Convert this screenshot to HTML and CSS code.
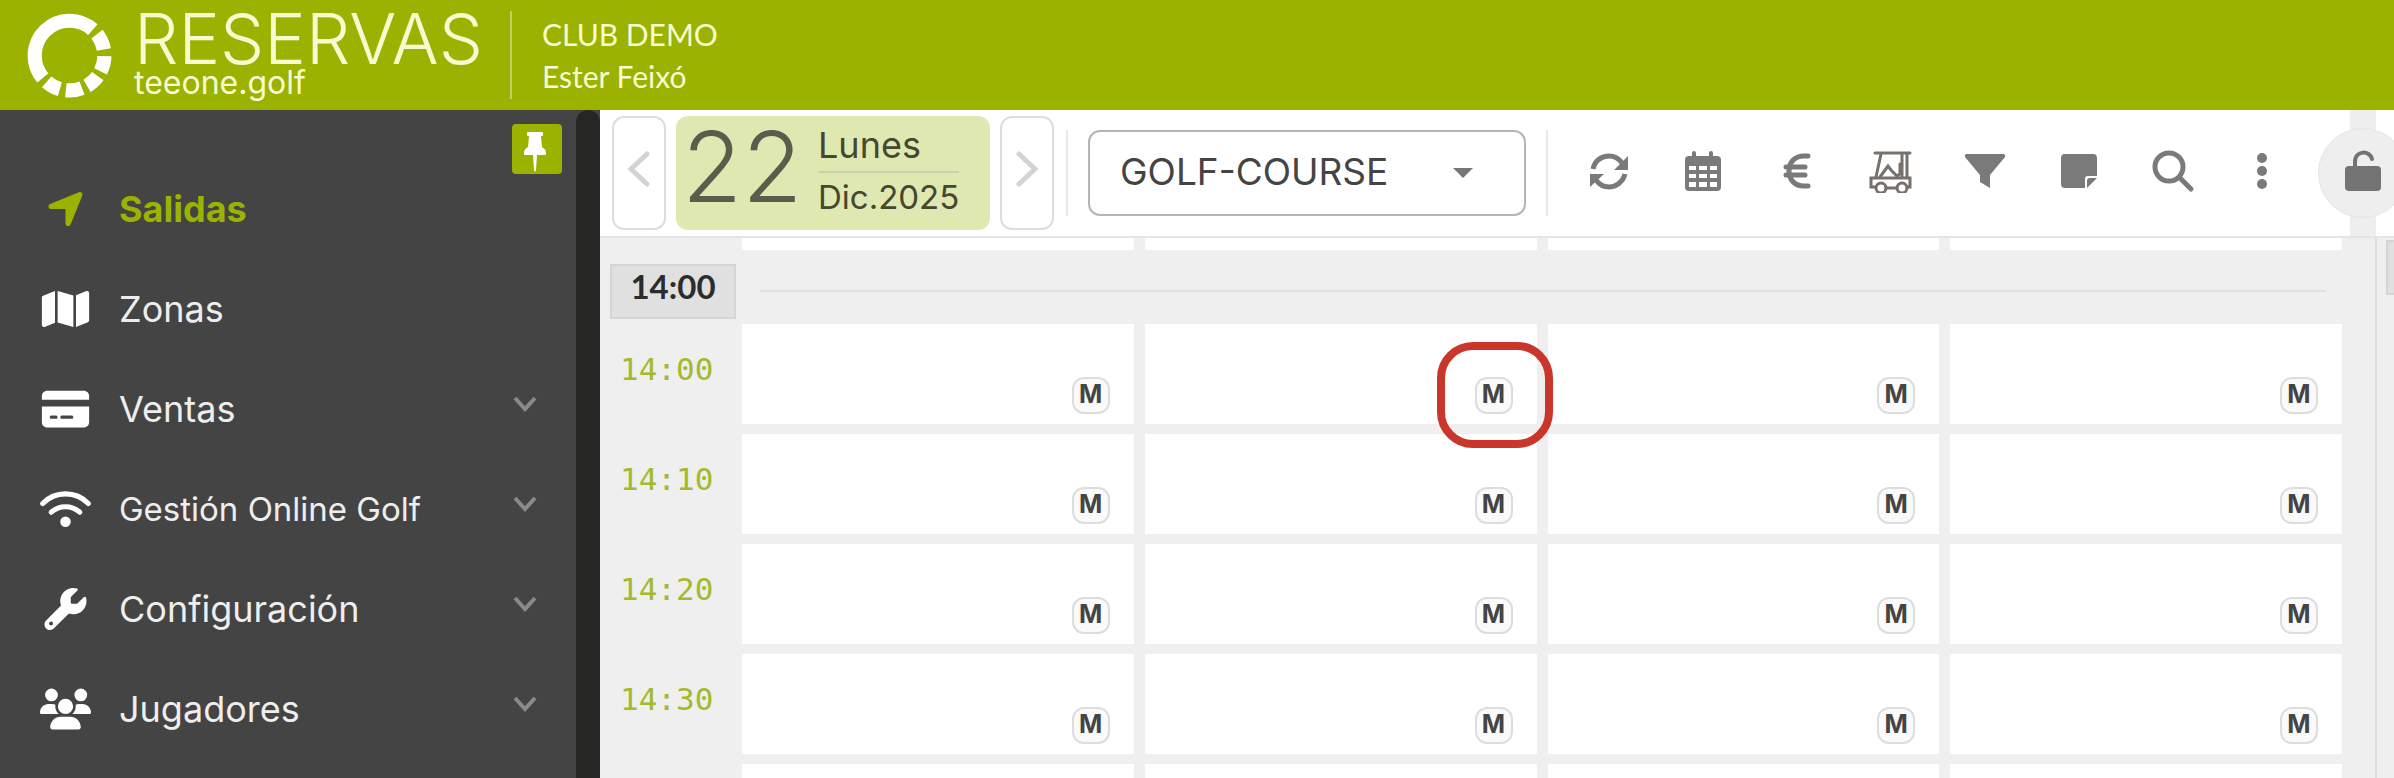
FILE: index.html
```html
<!DOCTYPE html>
<html lang="es">
<head>
  <meta charset="utf-8">
  <title>Reservas teeone.golf</title>
  <link rel="stylesheet" href="styles.css">
</head>
<body>

  <header class="header">
    <svg class="logo" viewBox="0 0 84 84" fill="none" stroke="#fff" stroke-width="14">
      <path d="M15.6 64.2A34.5 34.5 0 0 1 65.1 16.4"/>
      <path d="M69.2 20.8A34.5 34.5 0 0 1 76 36"/>
      <path d="M76.5 42.6A34.5 34.5 0 0 1 72.7 57.7"/>
      <path d="M69.9 62.3A34.5 34.5 0 0 1 59.3 71.9"/>
      <path d="M54.4 74.2A34.5 34.5 0 0 1 38.4 76.3"/>
      <path d="M32.5 75.2A34.5 34.5 0 0 1 19.4 68"/>
    </svg>
    <div class="brand">
      <span class="brand-name">RESERVAS</span>
      <span class="brand-site">teeone.golf</span>
    </div>
    <div class="account">
      <span>CLUB DEMO</span>
      <span>Ester Feixó</span>
    </div>
  </header>

  <div class="page">
    <nav class="sidebar">
      <button class="pin" aria-label="Fijar menú">
        <svg viewBox="0 0 22 40"><path d="M4 0h14q1 0 1 1v2q0 1-1 1h-1l1 11q4 2 4 6v1q0 1-1 1h-8l-1 15-1 2-1-2-1-15H1q-1 0-1-1v-1q0-4 4-6L5 4H4Q3 4 3 3V1q0-1 1-1z"/></svg>
      </button>
      <ul class="menu">
        <li>
          <a class="active" href="#">
            <svg class="menu-icon" viewBox="-40 0 528 512"><path d="M429.6 92.1c4.9-11.9 2.1-25.6-7-34.7s-22.8-11.9-34.7-7l-352 144c-14.2 5.8-22.2 20.8-19.3 35.8s16.1 25.8 31.4 25.8H224V432c0 15.3 10.8 28.4 25.8 31.4s30-5.1 35.8-19.3l144-352z"/></svg>
            <span>Salidas</span>
          </a>
        </li>
        <li>
          <a href="#">
            <svg class="menu-icon" viewBox="0 0 576 512"><path d="M384 476.1L192 421.2V35.9L384 90.8V476.1zm32-1.2V88.4L543.1 37.5c15.8-6.3 32.9 5.3 32.9 22.3V394.6c0 9.8-6 18.6-15.1 22.3L416 474.8zM15.1 95.1L160 37.2V423.6L32.9 474.5C17.1 480.8 0 469.2 0 452.2V117.4c0-9.8 6-18.6 15.1-22.3z"/></svg>
            <span>Zonas</span>
          </a>
        </li>
        <li>
          <a href="#">
            <svg class="menu-icon" viewBox="0 0 576 512"><path d="M0 96C0 60.7 28.7 32 64 32H512c35.3 0 64 28.7 64 64v48H0V96zM0 224H576V416c0 35.3-28.7 64-64 64H64c-35.3 0-64-28.7-64-64V224zM112 336c-8.8 0-16 14-16 20s7.2 20 16 20h64c8.8 0 16-14 16-20s-7.2-20-16-20H112zm112 20c0 8.8 7.2 20 16 20H368c8.8 0 16-14 16-20s-7.2-20-16-20H240c-8.8 0-16 14-16 20z"/></svg>
            <span>Ventas</span>
            <svg class="arrow" viewBox="0 0 24 16"><path d="M2 2l10 11L22 2"/></svg>
          </a>
        </li>
        <li>
          <a class="long" href="#">
            <svg class="menu-icon" viewBox="0 0 640 512"><g fill="none" stroke="#fff" stroke-width="64" stroke-linecap="round"><path d="M34 186A401 401 0 0 1 606 186"/><path d="M142 296A266 266 0 0 1 498 296"/></g><circle cx="320" cy="416" r="66"/></svg>
            <span>Gestión Online Golf</span>
            <svg class="arrow" viewBox="0 0 24 16"><path d="M2 2l10 11L22 2"/></svg>
          </a>
        </li>
        <li>
          <a href="#">
            <svg class="menu-icon" viewBox="0 0 512 512"><path d="M352 320c88.4 0 160-71.6 160-160c0-15.3-2.2-30.1-6.2-44.2c-3.1-10.8-16.4-13.2-24.3-5.3l-76.8 76.8c-3 3-7.1 4.7-11.3 4.7H336c-8.8 0-16-7.2-16-16V118.6c0-4.2 1.7-8.3 4.7-11.3l76.8-76.8c7.9-7.9 5.4-21.2-5.3-24.3C382.1 2.2 367.3 0 352 0C263.6 0 192 71.6 192 160c0 19.1 3.4 37.5 9.5 54.5L19.9 396.1C7.2 408.8 0 426.1 0 444.1C0 481.6 30.4 512 67.9 512c18 0 35.3-7.2 48-19.9L297.5 310.5c17 6.2 35.4 9.5 54.5 9.5zM80 408a24 24 0 1 1 0 48 24 24 0 1 1 0-48z"/></svg>
            <span>Configuración</span>
            <svg class="arrow" viewBox="0 0 24 16"><path d="M2 2l10 11L22 2"/></svg>
          </a>
        </li>
        <li>
          <a href="#">
            <svg class="menu-icon" viewBox="0 0 640 512"><path d="M144 0a80 80 0 1 1 0 160A80 80 0 1 1 144 0zM512 0a80 80 0 1 1 0 160A80 80 0 1 1 512 0zM0 298.7C0 239.8 47.8 192 106.7 192h42.7c15.9 0 31 3.5 44.6 9.7c-1.3 7.2-1.9 14.7-1.9 22.3c0 38.2 16.8 72.5 43.3 96H21.3C9.6 320 0 310.4 0 298.7zM405.3 320c26.6-23.5 43.3-57.8 43.3-96c0-7.6-.7-15-1.9-22.3c13.6-6.3 28.7-9.7 44.6-9.7h42.7C592.2 192 640 239.8 640 298.7c0 11.8-9.6 21.3-21.3 21.3H405.3zM224 224a96 96 0 1 1 192 0 96 96 0 1 1 -192 0zM128 485.3C128 411.7 187.7 352 261.3 352H378.7C452.3 352 512 411.7 512 485.3c0 14.7-11.9 26.7-26.7 26.7H154.7c-14.7 0-26.7-11.9-26.7-26.7z"/></svg>
            <span>Jugadores</span>
            <svg class="arrow" viewBox="0 0 24 16"><path d="M2 2l10 11L22 2"/></svg>
          </a>
        </li>
      </ul>
    </nav>
    <div class="sidebar-edge"></div>

    <main class="content">
      <div class="toolbar">
        <button class="step" aria-label="Día anterior">
          <svg viewBox="0 0 22 36"><path d="M19 3L3 18l16 15"/></svg>
        </button>
        <button class="date">
          <span class="day">22</span>
          <span class="date-text">
            <span class="weekday">Lunes</span>
            <span class="month">Dic.2025</span>
          </span>
        </button>
        <button class="step" aria-label="Día siguiente">
          <svg viewBox="0 0 22 36"><path d="M3 3l16 15L3 33"/></svg>
        </button>
        <span class="separator"></span>
        <div class="course">
          <select aria-label="Recorrido">
            <option>GOLF-COURSE</option>
          </select>
          <svg viewBox="0 0 20 10"><path d="M0 0h20L10 10z"/></svg>
        </div>
        <span class="separator"></span>
        <div class="tools">
          <button aria-label="Actualizar">
            <svg viewBox="0 0 44 44"><g fill="none" stroke="currentColor" stroke-width="5"><path d="M6 20C8 11 15 7 22 7q8 0 13 7"/><path d="M38 25c-2 8-9 13-16 13q-8 0-13-7"/></g><path d="M41 7v14H27zM3 38V25h14z"/></svg>
          </button>
          <button aria-label="Calendario">
            <svg viewBox="0 0 44 44"><path fill-rule="evenodd" d="M13 2q2 0 2 2v3h13V4q0-2 2-2t2 2v3h4q4 0 4 4v27q0 4-4 4H8q-4 0-4-4V11q0-4 4-4h3V4q0-2 2-2zM8 17v4h7v-4zM18 17v4h8v-4zM29 17v4h7v-4zM8 25v4h7v-4zM18 25v4h8v-4zM29 25v4h7v-4zM8 33v5h7v-5zM18 33v5h8v-5zM29 33v5h7v-5z"/></svg>
          </button>
          <button aria-label="Pagos">
            <svg class="line" viewBox="0 0 44 44" stroke-width="5"><path d="M33 7h-4C20 7 14 13 14 22s6 15 15 15h4M11 18h19M11 26h19"/></svg>
          </button>
          <button aria-label="Buggies">
            <svg class="line buggy" viewBox="0 0 44 44" stroke-width="3"><path d="M6 4h35M12 5L7 28M33 5v23M38 5v23"/><path d="M11 28l8-11 3 4 6 6 3-2V15"/><path d="M6 38H2V29h39v9h-3M17 39h11"/><circle cx="12" cy="39" r="5"/><circle cx="33" cy="39" r="5"/></svg>
          </button>
          <button aria-label="Filtrar">
            <svg viewBox="0 0 44 44"><path d="M3 5h38q2 1 1 3L27 26v13L17 33v-7L2 8Q1 6 3 5z"/></svg>
          </button>
          <button aria-label="Notas">
            <svg viewBox="0 0 44 44"><path d="M8 5h28q4 0 4 4v18H31q-3 0-3 3v9H8q-4 0-4-4V9q0-4 4-4z"/><path d="M40 29L30 39v-7q0-3 3-3z"/></svg>
          </button>
          <button aria-label="Buscar">
            <svg class="line" viewBox="0 0 44 44" stroke-width="5"><circle cx="18" cy="18" r="14"/><path d="M29 29l11 11"/></svg>
          </button>
          <button class="more" aria-label="Más opciones">
            <svg viewBox="0 0 44 44"><circle cx="22" cy="9" r="5"/><circle cx="22" cy="22" r="5"/><circle cx="22" cy="35" r="5"/></svg>
          </button>
        </div>
        <div class="lock-slot">
          <button class="lock" aria-label="Desbloquear">
            <svg viewBox="0 0 44 44"><path d="M8 17h28q4 0 4 4v17q0 4-4 4H8q-4 0-4-4V21q0-4 4-4z"/><path d="M14 19v-6C14 1 29 1 31 10" fill="none" stroke="currentColor" stroke-width="4" stroke-linecap="round"/></svg>
          </button>
        </div>
      </div>

      <div class="panels">
        <section class="schedule">
          <div class="slot-row clipped">
            <span class="time"></span>
            <div class="cells"><div></div><div></div><div></div><div></div></div>
          </div>
          <div class="hour-row">
            <button class="hour">14:00</button>
            <hr>
          </div>
          <div class="slot-row">
            <span class="time">14:00</span>
            <div class="cells">
              <div><button class="badge">M</button></div>
              <div><button class="badge marked">M</button></div>
              <div><button class="badge">M</button></div>
              <div><button class="badge">M</button></div>
            </div>
          </div>
          <div class="slot-row">
            <span class="time">14:10</span>
            <div class="cells">
              <div><button class="badge">M</button></div>
              <div><button class="badge">M</button></div>
              <div><button class="badge">M</button></div>
              <div><button class="badge">M</button></div>
            </div>
          </div>
          <div class="slot-row">
            <span class="time">14:20</span>
            <div class="cells">
              <div><button class="badge">M</button></div>
              <div><button class="badge">M</button></div>
              <div><button class="badge">M</button></div>
              <div><button class="badge">M</button></div>
            </div>
          </div>
          <div class="slot-row">
            <span class="time">14:30</span>
            <div class="cells">
              <div><button class="badge">M</button></div>
              <div><button class="badge">M</button></div>
              <div><button class="badge">M</button></div>
              <div><button class="badge">M</button></div>
            </div>
          </div>
          <div class="slot-row">
            <span class="time"></span>
            <div class="cells"><div></div><div></div><div></div><div></div></div>
          </div>
        </section>
        <aside class="next-panel">
          <button class="hour" aria-label="Siguiente recorrido"></button>
        </aside>
      </div>
    </main>
  </div>

</body>
</html>
```
FILE: styles.css
```css
* {
  box-sizing: border-box;
}
body {
  margin: 0;
  height: 100vh;
  display: flex;
  flex-direction: column;
  overflow: hidden;
  color: #444;
  font-family: Inter, "Liberation Sans", sans-serif;
  font-size: 36px;
}
button, select {
  font-family: inherit;
  color: inherit;
  cursor: pointer;
}
button {
  padding: 0;
  border: none;
  background: none;
}
svg {
  display: block;
  fill: currentColor;
}

/* header */
.header {
  flex: none;
  display: flex;
  align-items: center;
  height: 110px;
  padding-left: 27px;
  background-color: #9bb200;
  color: #f7fbd0;
}
.logo {
  width: 85px;
  height: 85px;
  fill: none;
}
.brand {
  display: flex;
  flex-direction: column;
  justify-content: center;
  width: 400px;
  height: 88px;
  padding-left: 22px;
  border-right: 2px solid #c3d167;
}
.brand-name {
  font-size: 70px;
  line-height: 56px;
  font-weight: 300;
}
.brand-site {
  font-size: 32px;
  line-height: 32px;
}
.account {
  display: flex;
  flex-direction: column;
  padding-left: 30px;
  font-family: Lato, sans-serif;
  font-size: 30px;
  line-height: 42px;
}

/* sidebar */
.page {
  flex: 1;
  display: flex;
  min-height: 0;
  background-color: #444;
}
.sidebar {
  position: relative;
  flex: none;
  width: 576px;
  padding-top: 49px;
}
.sidebar-edge {
  flex: none;
  width: 24px;
  background-color: #262624;
  border-radius: 12px 12px 0 0;
}
.pin {
  position: absolute;
  top: 14px;
  right: 14px;
  width: 50px;
  height: 50px;
  padding: 8px 12px 2px;
  border-radius: 4px;
  background-color: #9bb200;
  color: #fff;
}
.pin svg {
  width: 22px;
  height: 40px;
}
.menu {
  margin: 0;
  padding: 0;
  list-style: none;
}
.menu a {
  display: flex;
  align-items: center;
  height: 100px;
  padding: 0 39px 0 40px;
  color: #eee;
  text-decoration: none;
}
.menu a.active {
  color: #9bb200;
  font-weight: bold;
}
.menu a.long {
  font-size: 33px;
}
.menu span {
  flex: 1;
}
.menu-icon {
  width: 51px;
  height: 42px;
  margin-right: 28px;
  fill: #fff;
}
.active .menu-icon {
  fill: #9bb200;
}
.arrow {
  width: 24px;
  height: 16px;
  margin-bottom: 10px;
  fill: none;
  stroke: #8a8a8a;
  stroke-width: 4;
}

/* toolbar */
.content {
  flex: 1;
  display: flex;
  flex-direction: column;
  min-width: 0;
  background-color: #efefef;
}
.toolbar {
  flex: none;
  display: flex;
  align-items: center;
  height: 128px;
  padding-left: 12px;
  overflow: hidden;
  background-color: #fff;
  border-bottom: 2px solid #e5e5e5;
}
.toolbar > * {
  flex: none;
}
.step {
  display: flex;
  align-items: center;
  justify-content: center;
  width: 54px;
  height: 114px;
  padding-bottom: 8px;
  border: 2px solid #ddd;
  border-radius: 12px;
}
.step svg {
  width: 22px;
  height: 36px;
  fill: none;
  stroke: #d3d3d3;
  stroke-width: 5;
  stroke-linecap: round;
}
.date {
  display: flex;
  width: 314px;
  height: 114px;
  margin: 0 10px;
  padding: 0 0 0 6px;
  border-radius: 12px;
  background-color: #dfe8b1;
  text-align: left;
}
.day {
  width: 136px;
  font-size: 98px;
  line-height: 102px;
  font-weight: 300;
  color: #5a5c4c;
}
.date-text {
  display: flex;
  flex-direction: column;
  font-size: 36px;
  color: #45472f;
}
.weekday {
  height: 57px;
  line-height: 58px;
  border-bottom: 2px solid #c9d0b0;
}
.month {
  font-size: 33px;
  line-height: 48px;
}
.separator {
  width: 2px;
  height: 86px;
  margin: 0 20px 0 12px;
  background-color: #e8e8e8;
}
.course {
  display: flex;
  align-items: center;
  width: 438px;
}
.course select {
  width: 438px;
  height: 86px;
  padding: 0 80px 4px 30px;
  border: 2px solid #b5b5b5;
  border-radius: 12px;
  background: none;
  appearance: none;
  font-size: 37px;
}
.course svg {
  width: 20px;
  height: 10px;
  margin-left: -73px;
  fill: #777;
  pointer-events: none;
}
.course + .separator {
  margin: 0 14px 0 20px;
}
.tools {
  display: flex;
  padding-bottom: 4px;
}
.tools button {
  display: flex;
  justify-content: center;
  width: 94px;
  color: #7a7a7a;
}
.tools .more {
  width: 84px;
}
.tools svg, .lock svg {
  width: 44px;
  height: 44px;
}
.tools .line {
  fill: none;
  stroke: currentColor;
  stroke-linecap: round;
}
.tools .buggy {
  stroke: #78706b;
}
.lock-slot {
  display: flex;
  align-items: center;
  height: 100%;
  margin-left: 14px;
  background: linear-gradient(#eee, #eee) 32px 0 / 26px 100% no-repeat;
}
.lock {
  display: flex;
  align-items: center;
  justify-content: center;
  width: 90px;
  height: 90px;
  padding-bottom: 4px;
  border: 1px solid #e5e5e5;
  border-radius: 50%;
  background-color: #eee;
  color: #737373;
}

/* tee times */
.panels {
  flex: 1;
  display: flex;
  min-height: 0;
  overflow: hidden;
}
.schedule {
  flex: 1;
  padding-right: 33px;
}
.slot-row {
  display: flex;
  height: 100px;
  margin-bottom: 10px;
}
.slot-row.clipped {
  height: 12px;
  margin: 0;
}
.time {
  width: 142px;
  padding-left: 20px;
  font-family: "DejaVu Sans Mono", monospace;
  font-size: 31px;
  line-height: 90px;
  color: #a5b92c;
}
.cells {
  flex: 1;
  display: grid;
  grid-template-columns: repeat(4, 1fr);
  gap: 11px;
}
.cells div {
  display: flex;
  align-items: flex-end;
  justify-content: flex-end;
  padding: 0 24px 10px 0;
  background-color: #fff;
}
.hour-row {
  display: flex;
  align-items: center;
  height: 74px;
  padding: 8px 16px 0 10px;
}
.hour {
  width: 126px;
  height: 55px;
  padding-bottom: 10px;
  border: 2px solid #d5d5d5;
  background-color: #e0e0e0;
  color: #2c2c2c;
  font-family: Lato, sans-serif;
  font-size: 33px;
  font-weight: bold;
}
.hour-row hr {
  flex: 1;
  height: 2px;
  margin: 0 0 0 24px;
  border: none;
  background-color: #e0e0e0;
}
.badge {
  position: relative;
  width: 38px;
  height: 37px;
  padding-bottom: 4px;
  border: 2px solid #ddd;
  border-radius: 12px;
  background-color: #fafafa;
  color: #444;
  font-size: 25px;
  line-height: 28px;
  font-weight: bold;
}
.marked::after {
  content: "";
  position: absolute;
  inset: -37px -42px -36px -40px;
  border: 8px solid #c9362b;
  border-radius: 36px;
}
.next-panel {
  flex: none;
  width: 19px;
  padding: 2px 0 0 9px;
  overflow: hidden;
  border-left: 2px solid #ddd;
}
```
